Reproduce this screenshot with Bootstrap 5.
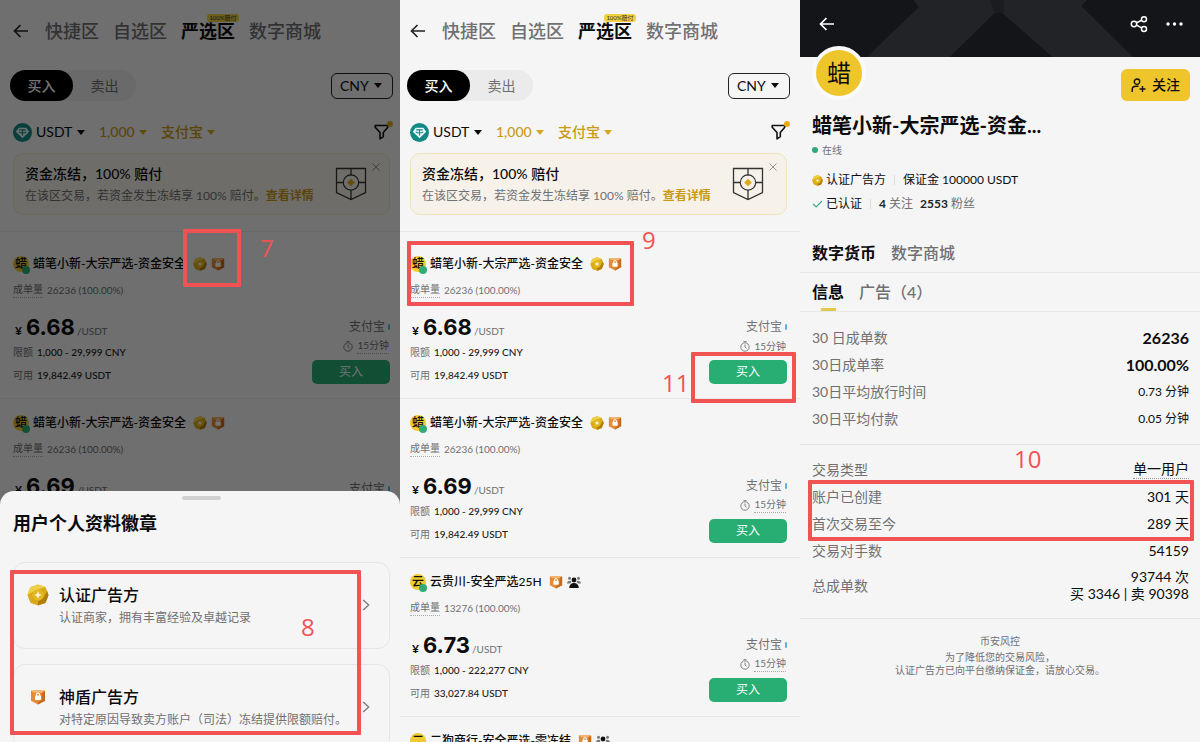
<!DOCTYPE html>
<html lang="zh-CN">
<head>
<meta charset="utf-8">
<meta name="viewport" content="width=device-width, initial-scale=1">
<title>C2C 严选区交易指引</title>
<link href="https://cdn.jsdelivr.net/npm/bootstrap@5.3.0/dist/css/bootstrap.min.css" rel="stylesheet">
<style>
:root { --ink:#0c0c0e; --soft:#707073; --gold:#c99a12; --paper:#f5f5f5; --line:#e8e8e8; --mark-red:#f15354; }
body { font-family: Lato, "Noto Sans CJK SC", sans-serif; color: var(--ink); background: var(--paper); line-height: 16px; font-size: 12px; }
a { color: inherit; text-decoration: none; }
button, select { font-family: inherit; color: inherit; }
svg { display: block; flex: none; }
h1, h2, p, dl, dd, dt { margin: 0; font-weight: inherit; }
.phone { position: relative; height: 100vh; overflow: hidden; background: var(--paper); }
.phone-a { --es: 13px; --ee: 10px; }
.phone-b { --es: 10px; --ee: 13px; }
.edge { padding-left: var(--es); padding-right: var(--ee); }
.soft { color: var(--soft); }
.gold { color: var(--gold); }
.t10 { font-size: 10px; }
.t14 { font-size: 14px; }
.dotted { border-bottom: 1px dotted #aaa; line-height: 15px; }

.plain { border: 0; background: none; padding: 0; }
.zones { padding-top: 17px; line-height: 28px; font-size: 18px; gap: 14px; font-weight: 500; color: var(--soft); }
.zones .arrow { margin-right: 2px; }
.zones .on { color: var(--ink); font-weight: 700; position: relative; }
.promo { position: absolute; left: 26px; top: -3px; width: 32px; height: 8px; border-radius: 3px; background: #f0d23c; color: #333; font-size: 6px; line-height: 8px; text-align: center; font-weight: 400; }
.side-row { margin: 25px -3px 0; }
.switch { background: #ebebeb; border-radius: 16px; }
.switch button { border: 0; width: 63px; height: 31px; border-radius: 16px; background: none; color: var(--soft); font-size: 14px; line-height: 31px; padding: 0; }
.switch .on { background: #000; color: #fff; font-weight: 500; }
.pick { appearance: none; border: 0; margin-right: 14px; padding: 0 12px 0 0; font-size: 14px; line-height: 24px; height: 24px; background: url("data:image/svg+xml,%3Csvg xmlns='http://www.w3.org/2000/svg' width='8' height='5'%3E%3Cpath d='M0 0h8L4 5z' fill='%230c0c0e'/%3E%3C/svg%3E") no-repeat right center; }
.pick.gold { background-image: url("data:image/svg+xml,%3Csvg xmlns='http://www.w3.org/2000/svg' width='8' height='5'%3E%3Cpath d='M0 0h8L4 5z' fill='%23d4a620'/%3E%3C/svg%3E"); font-weight: 500; color: var(--gold); }
.pick.boxed { border: 1px solid #222; border-radius: 6px; margin-right: 0; width: 62px; height: 26px; padding-left: 8px; background-position: right 10px center; }
.filters { margin-top: 19px; }
.notice { margin: 9px var(--ee) 0 var(--es); height: 62px; border: 1px solid #ece4bd; border-radius: 10px; background: #f6f2ea; position: relative; padding: 0 22px 0 11px; }
.notice h2 { font-size: 14px; line-height: 20px; font-weight: 500; }
.notice .shut { position: absolute; right: 9px; top: 9px; }

.offers { margin-top: 16px; }
.offer { border-top: 1px solid var(--line); padding-top: 14px; padding-bottom: 14px; }
.offer:first-child { padding-top: 22px; }
.who { height: 20px; }
.face { position: relative; width: 16px; height: 16px; border-radius: 50%; background: #efcb2f; font-size: 12px; line-height: 16px; text-align: center; font-weight: 500; margin-right: 4px; }
.face::after { content: ""; position: absolute; right: -1px; bottom: -2px; width: 8px; height: 8px; border-radius: 50%; background: #2eae74; }
.trader { margin-right: 7px; font-weight: 500; }
.done { margin: 8px 0 15px; gap: 4px; }
.price { height: 28px; line-height: 28px; padding-left: 2px; gap: 2px; }
.price .yen { margin-right: 2px; font-weight: 700; }
.price strong { font-family: Inter, sans-serif; font-size: 22px; font-weight: 700; }
.limit { margin-top: 3px; gap: 4px; }
.avail { margin-top: 7px; gap: 4px; }
.limit b, .avail b { font-weight: 500; color: #222; }
.pay { margin-top: 6px; gap: 3px; }
.pay i { width: 2px; height: 6px; border-radius: 1px; background: #58b4de; }
.time { margin: 3px 1px 6px 0; gap: 4px; }
.buy { border: 0; border-radius: 5px; width: 78px; height: 24px; padding: 0; background: #28ad72; color: #fff; font-size: 12px; line-height: 24px; }

.veil { position: absolute; inset: 0; background: rgba(0,0,0,.55); }
.sheet { position: absolute; left: 0; right: 0; bottom: 0; height: 251px; background: var(--paper); border-radius: 14px 14px 0 0; overflow: hidden; padding: 5px 10px 0 13px; }
.grip { width: 39px; height: 4px; border-radius: 2px; background: #d0d0d0; }
.sheet h2 { margin: 11px 0 27px; font-size: 18px; line-height: 24px; font-weight: 700; }
.tier { height: 87px; margin-bottom: 15px; border: 1px solid #e6e6ea; border-radius: 12px; padding: 20px 19px 0 13px; gap: 10px; }
.tier h3 { margin: 0; font-size: 16px; line-height: 24px; font-weight: 500; }
.tier p { margin-top: 2px; line-height: 18px; color: var(--soft); }
.tier .glyph { width: 22px; height: 24px; }
.tier .go { margin-top: 16px; }

.cover { height: 57px; background: #141519; position: relative; color: #fff; }
.cover .art { position: absolute; inset: 0; width: 100%; height: 100%; }
.cover .bar-row { position: relative; padding: 12px 17px 0 19px; }
.body3 { padding: 0 10px 0 12px; }
.big-face { width: 54px; height: 54px; margin: -11px 0 0; border-radius: 50%; background: #efc52c; border: 4px solid #fafafa; font-size: 24px; line-height: 46px; text-align: center; position: relative; }
.head-row { height: 44px; }
.follow { margin-top: 12px; width: 69px; height: 32px; border: 0; border-radius: 6px; background: #efc52c; font-size: 14px; font-weight: 500; padding: 0; gap: 6px; }
.nick { margin-top: 10px; font-size: 20px; line-height: 28px; font-weight: 700; }
.live { margin-top: 3px; gap: 4px; }
.live i { width: 6px; height: 6px; border-radius: 50%; background: #33a578; }
.facts { margin-top: 14px; gap: 3px; }
.facts2 { margin-top: 8px; gap: 3px; }
.bar-v { width: 1px; height: 10px; background: #ddd; margin: 0 5px; }
.tabs1, .tabs2 { font-size: 16px; line-height: 24px; gap: 15px; color: var(--soft); border-bottom: 1px solid var(--line); font-weight: 500; }
.tabs1 { margin-top: 29px; padding: 0 12px 7px; }
.tabs2 { padding: 7px 12px 0; height: 39px; }
.tabs1 .on, .tabs2 .on { color: var(--ink); font-weight: 700; }
.tabs2 .on { position: relative; }
.tabs2 .on::after { content: ""; position: absolute; left: 9px; top: 28px; width: 15px; height: 3px; background: #e0c94c; }
.stats { padding: 12px 11px 12px 12px; border-bottom: 1px solid #e2e2e2; font-size: 14px; line-height: 27px; }
.stats dt { color: var(--soft); font-weight: 400; }
.stats .strong { font-size: 16px; font-weight: 700; }
.stats .small-v { font-size: 12px; }
.stats .two { line-height: 17px; margin-top: 4px; }
.stats.last { padding-top: 11px; padding-bottom: 16px; }
.stats .hint { line-height: 18px; margin: 4px 0; border-bottom: 1px dotted #999; }
.foot { margin-top: 16px; font-size: 10px; line-height: 13px; text-align: center; color: var(--soft); }
.foot p + p { margin-top: 3px; }

/* step markers drawn over the screens */
.ring { position: absolute; border: 4px solid var(--mark-red); border-radius: 1px; }
.step { position: absolute; color: var(--mark-red); font: 24px/28px "Open Sans", sans-serif; }
.ring-7 { left: 183px; top: 229px; width: 58px; height: 58px; }
.step-7 { left: 260px; top: 234px; }
.ring-8 { left: 10px; right: 39px; top: 570px; height: 165px; }
.step-8 { left: 301px; top: 613px; }
.ring-9 { left: 7px; top: 241px; width: 227px; height: 65px; }
.step-9 { left: 242px; top: 226px; }
.ring-11 { right: 4px; top: 352px; width: 105px; height: 51px; }
.step-11 { left: 262px; top: 369px; }
.ring-10 { left: 8px; right: 6px; top: 480px; height: 61px; }
.step-10 { left: 214px; top: 445px; }
</style>
</head>
<body>
<svg width="0" height="0" class="position-absolute" aria-hidden="true">
  <symbol id="back" viewBox="0 0 16 14"><path d="M15 7H1.500M7.500 1 1.500 7l6 6" fill="none" stroke="currentColor" stroke-width="1.700"/></symbol>
  <symbol id="coin" viewBox="0 0 20 20"><circle cx="10" cy="10" r="10" fill="#138a84"/><path d="M6 5h8l3 4.200-7 6.800-7-6.800z" fill="#eafaf8"/><path d="M6.500 7.200h7M10 7.200v6M6 9.500c2 1 6 1 8 0" stroke="#138a84" stroke-width="1.200" fill="none"/></symbol>
  <symbol id="funnel" viewBox="0 0 16 16"><path d="M1.200 1.500h12.600v1.700L9.300 8.500v4.200L6 14.800V8.500L1.200 3.200z" fill="none" stroke="#111" stroke-width="1.600" stroke-linejoin="round"/></symbol>
  <symbol id="shield" viewBox="0 0 32 34"><path d="M1.500 1.500h29v24L16 32.500 1.500 25.500zM16 1.500v7M16 23v9.500M1.500 15.500h6.500M24 15.500h6.500" fill="none" stroke="#333" stroke-width="1.300"/><circle cx="16" cy="15.500" r="7.700" fill="none" stroke="#333" stroke-width="1.200"/><path d="m16 11.700 3.800 3.800-3.800 3.800-3.800-3.800z" fill="#e0a61c"/></symbol>
  <symbol id="cross" viewBox="0 0 8 8"><path d="m.5.5 7 7m0-7-7 7" stroke="#888" stroke-width=".9"/></symbol>
  <symbol id="medal" viewBox="0 0 22 22"><path d="m11 .5 3.400 1.200 4 1.400 1.700 4 1.400 3.900-1.400 3.900-1.700 4-4 1.400-3.400 1.200-3.400-1.200-4-1.400-1.700-4L.500 11l1.400-3.900 1.700-4 4-1.400z" fill="#d9a916"/><path d="m11 .5 3.400 1.200 4 1.400L11 5.500 5.500 8 .5 11l1.400-3.900 1.700-4 4-1.400z" fill="#efcf4a"/><path d="m20.100 7.100 1.400 3.900-1.400 3.900-1.700 4-4 1.400L11 21.500V17l5-2.500z" fill="#b27e0a"/><circle cx="11" cy="11" r="5.700" fill="#e3b722"/><path d="m11 7.300 1.100 2.600 2.600 1.100-2.600 1.100L11 14.700l-1.100-2.600L7.300 11l2.600-1.100z" fill="#fff8dc"/></symbol>
  <symbol id="guard" viewBox="0 0 16 16"><path d="M1 1.800 8 1.200l7 .6v9.900l-7 3.800-7-3.800z" fill="#e58a35"/><path d="M1 1.800 8 1.200l7 .6-3 1.900H4z" fill="#f6b56e"/><path d="M15 1.800v9.900l-7 3.800v-2.200l4-2.600v-7z" fill="#c9691c"/><rect x="5" y="6.600" width="6" height="4.400" rx=".8" fill="#fff"/><path d="M6.400 7V5.700a1.600 1.600 0 0 1 3.200 0V7" fill="none" stroke="#fff" stroke-width="1.100"/></symbol>
  <symbol id="crowd" viewBox="0 0 14 12"><g fill="#777"><circle cx="2.500" cy="2.200" r="1.500"/><circle cx="11.500" cy="2.200" r="1.500"/><path d="M0 7.500c0-3 4-3.500 4.500-1.500L3 7.500zM14 7.500c0-3-4-3.500-4.500-1.500L11 7.500z"/></g><circle cx="7" cy="4" r="2.400" fill="#111"/><path d="M2.200 12c0-3 1.800-5 4.800-5s4.800 2 4.800 5z" fill="#111"/></symbol>
  <symbol id="clock" viewBox="0 0 10 11"><circle cx="5" cy="6" r="4.200" fill="none" stroke="#777" stroke-width=".9"/><path d="M3.500.6h3M5 3.500V6l1.600 1.300" stroke="#777" stroke-width=".9" fill="none"/></symbol>
  <symbol id="chev" viewBox="0 0 8 12"><path d="m1.200 1 5.500 5-5.500 5" fill="none" stroke="#777" stroke-width="1.300"/></symbol>
</svg>

<main class="container-fluid p-0">
<div class="row g-0">

  <!-- badge explanation sheet -->
  <section class="col-12 col-md-4 phone phone-a">
    <nav class="edge zones d-flex align-items-center">
      <a href="#" class="arrow text-dark" aria-label="返回"><svg width="16" height="14"><use href="#back"/></svg></a>
      <a href="#">快捷区</a><a href="#">自选区</a><a href="#" class="on">严选区<span class="promo">100%赔付</span></a><a href="#">数字商城</a>
    </nav>
    <div class="edge"><div class="side-row d-flex justify-content-between align-items-center">
      <div class="switch"><button class="on" type="button">买入</button><button type="button">卖出</button></div>
      <select class="pick boxed" aria-label="法币"><option>CNY</option></select>
    </div></div>
    <div class="edge filters d-flex align-items-center">
      <svg width="19" height="19" class="me-1"><use href="#coin"/></svg>
      <select class="pick" aria-label="币种"><option>USDT</option></select>
      <select class="pick gold" aria-label="金额"><option>1,000</option></select>
      <select class="pick gold" aria-label="支付方式"><option>支付宝</option></select>
      <button type="button" class="plain ms-auto position-relative" aria-label="筛选"><svg width="16" height="16"><use href="#funnel"/></svg><svg width="6" height="6" class="position-absolute top-0 start-100 translate-middle"><circle cx="3" cy="3" r="3" fill="#e5ac1c"/></svg></button>
    </div>
    <div class="notice d-flex justify-content-between align-items-center">
      <div><h2>资金冻结，100% 赔付</h2><p class="soft mt-1">在该区交易，若资金发生冻结享 100% 赔付。<a href="#" class="gold fw-bold">查看详情</a></p></div>
      <svg width="32" height="34"><use href="#shield"/></svg>
      <button type="button" class="plain shut" aria-label="关闭"><svg width="8" height="8"><use href="#cross"/></svg></button>
    </div>
    <div class="offers">
      <article class="offer edge">
        <div class="who d-flex align-items-center"><span class="face">蜡</span><span class="trader">蜡笔小新-大宗严选-资金安全</span><svg width="14" height="14" class="me-1"><use href="#medal"/></svg><svg width="14" height="14"><use href="#guard"/></svg></div>
        <div class="done d-flex t10 soft"><span class="dotted">成单量</span><span>26236 (100.00%)</span></div>
        <div class="d-flex justify-content-between">
          <div><div class="price d-flex align-items-baseline"><span class="yen">¥</span><strong>6.68</strong><span class="t10 soft">/USDT</span></div>
            <div class="limit d-flex t10"><span class="soft">限额</span><b>1,000 - 29,999 CNY</b></div>
            <div class="avail d-flex t10"><span class="soft">可用</span><b>19,842.49 USDT</b></div></div>
          <div class="d-flex flex-column align-items-end"><div class="pay soft d-flex align-items-center">支付宝<i></i></div>
            <div class="time t10 soft d-flex align-items-center"><svg width="10" height="11"><use href="#clock"/></svg><span class="dotted">15分钟</span></div>
            <button type="button" class="buy">买入</button></div>
        </div>
      </article>
      <article class="offer edge">
        <div class="who d-flex align-items-center"><span class="face">蜡</span><span class="trader">蜡笔小新-大宗严选-资金安全</span><svg width="14" height="14" class="me-1"><use href="#medal"/></svg><svg width="14" height="14"><use href="#guard"/></svg></div>
        <div class="done d-flex t10 soft"><span class="dotted">成单量</span><span>26236 (100.00%)</span></div>
        <div class="d-flex justify-content-between">
          <div class="price d-flex align-items-baseline"><span class="yen">¥</span><strong>6.69</strong><span class="t10 soft">/USDT</span></div>
          <div class="pay soft d-flex align-items-center">支付宝<i></i></div>
        </div>
      </article>
    </div>
    <div class="veil"></div>
    <div class="sheet">
      <div class="grip mx-auto"></div>
      <h2>用户个人资料徽章</h2>
      <a href="#" class="tier d-flex"><svg class="glyph"><use href="#medal"/></svg><div class="flex-grow-1"><h3>认证广告方</h3><p>认证商家，拥有丰富经验及卓越记录</p></div><svg width="8" height="12" class="go"><use href="#chev"/></svg></a>
      <a href="#" class="tier d-flex"><svg class="glyph" viewBox="-3 -4 22 24"><use href="#guard" width="16" height="16"/></svg><div class="flex-grow-1"><h3>神盾广告方</h3><p class="text-nowrap">对特定原因导致卖方账户（司法）冻结提供限额赔付。</p></div><svg width="8" height="12" class="go"><use href="#chev"/></svg></a>
    </div>
    <span class="ring ring-7"></span><span class="step step-7">7</span>
    <span class="ring ring-8 pe-none"></span><span class="step step-8">8</span>
  </section>

  <!-- offer list -->
  <section class="col-12 col-md-4 phone phone-b">
    <nav class="edge zones d-flex align-items-center">
      <a href="#" class="arrow text-dark" aria-label="返回"><svg width="16" height="14"><use href="#back"/></svg></a>
      <a href="#">快捷区</a><a href="#">自选区</a><a href="#" class="on">严选区<span class="promo">100%赔付</span></a><a href="#">数字商城</a>
    </nav>
    <div class="edge"><div class="side-row d-flex justify-content-between align-items-center">
      <div class="switch"><button class="on" type="button">买入</button><button type="button">卖出</button></div>
      <select class="pick boxed" aria-label="法币"><option>CNY</option></select>
    </div></div>
    <div class="edge filters d-flex align-items-center">
      <svg width="19" height="19" class="me-1"><use href="#coin"/></svg>
      <select class="pick" aria-label="币种"><option>USDT</option></select>
      <select class="pick gold" aria-label="金额"><option>1,000</option></select>
      <select class="pick gold" aria-label="支付方式"><option>支付宝</option></select>
      <button type="button" class="plain ms-auto position-relative" aria-label="筛选"><svg width="16" height="16"><use href="#funnel"/></svg><svg width="6" height="6" class="position-absolute top-0 start-100 translate-middle"><circle cx="3" cy="3" r="3" fill="#e5ac1c"/></svg></button>
    </div>
    <div class="notice d-flex justify-content-between align-items-center">
      <div><h2>资金冻结，100% 赔付</h2><p class="soft mt-1">在该区交易，若资金发生冻结享 100% 赔付。<a href="#" class="gold fw-bold">查看详情</a></p></div>
      <svg width="32" height="34"><use href="#shield"/></svg>
      <button type="button" class="plain shut" aria-label="关闭"><svg width="8" height="8"><use href="#cross"/></svg></button>
    </div>
    <div class="offers">
      <article class="offer edge">
        <div class="who d-flex align-items-center"><span class="face">蜡</span><span class="trader">蜡笔小新-大宗严选-资金安全</span><svg width="14" height="14" class="me-1"><use href="#medal"/></svg><svg width="14" height="14"><use href="#guard"/></svg></div>
        <div class="done d-flex t10 soft"><span class="dotted">成单量</span><span>26236 (100.00%)</span></div>
        <div class="d-flex justify-content-between">
          <div><div class="price d-flex align-items-baseline"><span class="yen">¥</span><strong>6.68</strong><span class="t10 soft">/USDT</span></div>
            <div class="limit d-flex t10"><span class="soft">限额</span><b>1,000 - 29,999 CNY</b></div>
            <div class="avail d-flex t10"><span class="soft">可用</span><b>19,842.49 USDT</b></div></div>
          <div class="d-flex flex-column align-items-end"><div class="pay soft d-flex align-items-center">支付宝<i></i></div>
            <div class="time t10 soft d-flex align-items-center"><svg width="10" height="11"><use href="#clock"/></svg><span>15分钟</span></div>
            <button type="button" class="buy">买入</button></div>
        </div>
      </article>
      <article class="offer edge">
        <div class="who d-flex align-items-center"><span class="face">蜡</span><span class="trader">蜡笔小新-大宗严选-资金安全</span><svg width="14" height="14" class="me-1"><use href="#medal"/></svg><svg width="14" height="14"><use href="#guard"/></svg></div>
        <div class="done d-flex t10 soft"><span class="dotted">成单量</span><span>26236 (100.00%)</span></div>
        <div class="d-flex justify-content-between">
          <div><div class="price d-flex align-items-baseline"><span class="yen">¥</span><strong>6.69</strong><span class="t10 soft">/USDT</span></div>
            <div class="limit d-flex t10"><span class="soft">限额</span><b>1,000 - 29,999 CNY</b></div>
            <div class="avail d-flex t10"><span class="soft">可用</span><b>19,842.49 USDT</b></div></div>
          <div class="d-flex flex-column align-items-end"><div class="pay soft d-flex align-items-center">支付宝<i></i></div>
            <div class="time t10 soft d-flex align-items-center"><svg width="10" height="11"><use href="#clock"/></svg><span class="dotted">15分钟</span></div>
            <button type="button" class="buy">买入</button></div>
        </div>
      </article>
      <article class="offer edge">
        <div class="who d-flex align-items-center"><span class="face">云</span><span class="trader">云贵川-安全严选25H</span><svg width="14" height="14" class="me-1"><use href="#guard"/></svg><svg width="14" height="12"><use href="#crowd"/></svg></div>
        <div class="done d-flex t10 soft"><span class="dotted">成单量</span><span>13276 (100.00%)</span></div>
        <div class="d-flex justify-content-between">
          <div><div class="price d-flex align-items-baseline"><span class="yen">¥</span><strong>6.73</strong><span class="t10 soft">/USDT</span></div>
            <div class="limit d-flex t10"><span class="soft">限额</span><b>1,000 - 222,277 CNY</b></div>
            <div class="avail d-flex t10"><span class="soft">可用</span><b>33,027.84 USDT</b></div></div>
          <div class="d-flex flex-column align-items-end"><div class="pay soft d-flex align-items-center">支付宝<i></i></div>
            <div class="time t10 soft d-flex align-items-center"><svg width="10" height="11"><use href="#clock"/></svg><span class="dotted">15分钟</span></div>
            <button type="button" class="buy">买入</button></div>
        </div>
      </article>
      <article class="offer edge">
        <div class="who d-flex align-items-center"><span class="face">二</span><span class="trader">二狗商行-安全严选-零冻结</span><svg width="14" height="14" class="me-1"><use href="#guard"/></svg><svg width="14" height="12"><use href="#crowd"/></svg></div>
      </article>
    </div>
    <span class="ring ring-9 pe-none"></span><span class="step step-9">9</span>
    <span class="ring ring-11 pe-none"></span><span class="step step-11">11</span>
  </section>

  <!-- advertiser profile -->
  <section class="col-12 col-md-4 phone">
    <header class="cover">
      <svg class="art" viewBox="0 0 400 57" preserveAspectRatio="none" aria-hidden="true"><path d="M113 0h174l-6 6 52 51h-81L202 13h-7l-45 44H67l52-50z" fill="#222327"/><path d="M195 13h7l50 44H150z" fill="#141519"/><path d="M190 0h14v13h-9z" fill="#1b1c20"/></svg>
      <div class="bar-row d-flex align-items-center">
        <a href="#" aria-label="返回" class="me-auto"><svg width="16" height="14"><use href="#back"/></svg></a>
        <button type="button" class="plain me-3 text-white" aria-label="分享"><svg width="20" height="24" viewBox="0 0 20 24"><g fill="none" stroke="#fff" stroke-width="1.500"><circle cx="4" cy="12" r="2.700"/><circle cx="14" cy="7.200" r="2.500"/><circle cx="14" cy="17" r="2.500"/><path d="m6.500 10.800 5.200-2.500M6.500 13.200l5.200 2.700"/></g></svg></button>
        <button type="button" class="plain text-white" aria-label="更多"><svg width="17" height="4"><g fill="#fff"><circle cx="2" cy="2" r="1.700"/><circle cx="8.500" cy="2" r="1.700"/><circle cx="15" cy="2" r="1.700"/></g></svg></button>
      </div>
    </header>
    <div class="body3">
      <div class="head-row d-flex justify-content-between align-items-start">
        <span class="big-face">蜡</span>
        <button type="button" class="follow d-flex align-items-center justify-content-center"><svg width="15" height="15" viewBox="0 0 15 15"><g fill="none" stroke="#111" stroke-width="1.400"><circle cx="6" cy="3.700" r="2.700"/><path d="M1.200 14v-2.300c0-2.400 1.500-3.500 3.800-3.500h2.500M11.500 8v6M8.500 11h6"/></g></svg>关注</button>
      </div>
      <h1 class="nick">蜡笔小新-大宗严选-资金...</h1>
      <div class="live t10 soft d-flex align-items-center"><i></i>在线</div>
      <div class="facts d-flex align-items-center"><svg width="11" height="11"><use href="#medal"/></svg>认证广告方<span class="bar-v"></span><span>保证金 100000 USDT</span></div>
      <div class="facts2 d-flex align-items-center"><svg width="11" height="8"><path d="m1 4 3.200 3L10 1" fill="none" stroke="#3fae86" stroke-width="1.200"/></svg>已认证<span class="bar-v"></span><span class="soft me-1"><b class="text-dark">4</b> 关注</span><span class="soft"><b class="text-dark">2553</b> 粉丝</span></div>
    </div>
    <nav class="tabs1 d-flex"><a href="#" class="on">数字货币</a><a href="#">数字商城</a></nav>
    <nav class="tabs2 d-flex"><a href="#" class="on">信息</a><a href="#">广告（4）</a></nav>
    <dl class="stats">
      <div class="d-flex justify-content-between"><dt>30 日成单数</dt><dd class="strong">26236</dd></div>
      <div class="d-flex justify-content-between"><dt>30日成单率</dt><dd class="strong">100.00%</dd></div>
      <div class="d-flex justify-content-between"><dt>30日平均放行时间</dt><dd class="small-v">0.73 分钟</dd></div>
      <div class="d-flex justify-content-between"><dt>30日平均付款</dt><dd class="small-v">0.05 分钟</dd></div>
    </dl>
    <dl class="stats last">
      <div class="d-flex justify-content-between"><dt>交易类型</dt><dd class="hint">单一用户</dd></div>
      <div class="d-flex justify-content-between"><dt>账户已创建</dt><dd>301 天</dd></div>
      <div class="d-flex justify-content-between"><dt>首次交易至今</dt><dd>289 天</dd></div>
      <div class="d-flex justify-content-between"><dt>交易对手数</dt><dd>54159</dd></div>
      <div class="two d-flex justify-content-between align-items-center"><dt>总成单数</dt><dd class="text-end">93744 次<br>买 3346 | 卖 90398</dd></div>
    </dl>
    <footer class="foot"><p>币安风控</p><p>为了降低您的交易风险，<br>认证广告方已向平台缴纳保证金，请放心交易。</p></footer>
    <span class="ring ring-10 pe-none"></span><span class="step step-10">10</span>
  </section>

</div>
</main>
<script src="https://cdn.jsdelivr.net/npm/bootstrap@5.3.0/dist/js/bootstrap.bundle.min.js"></script>
</body>
</html>
